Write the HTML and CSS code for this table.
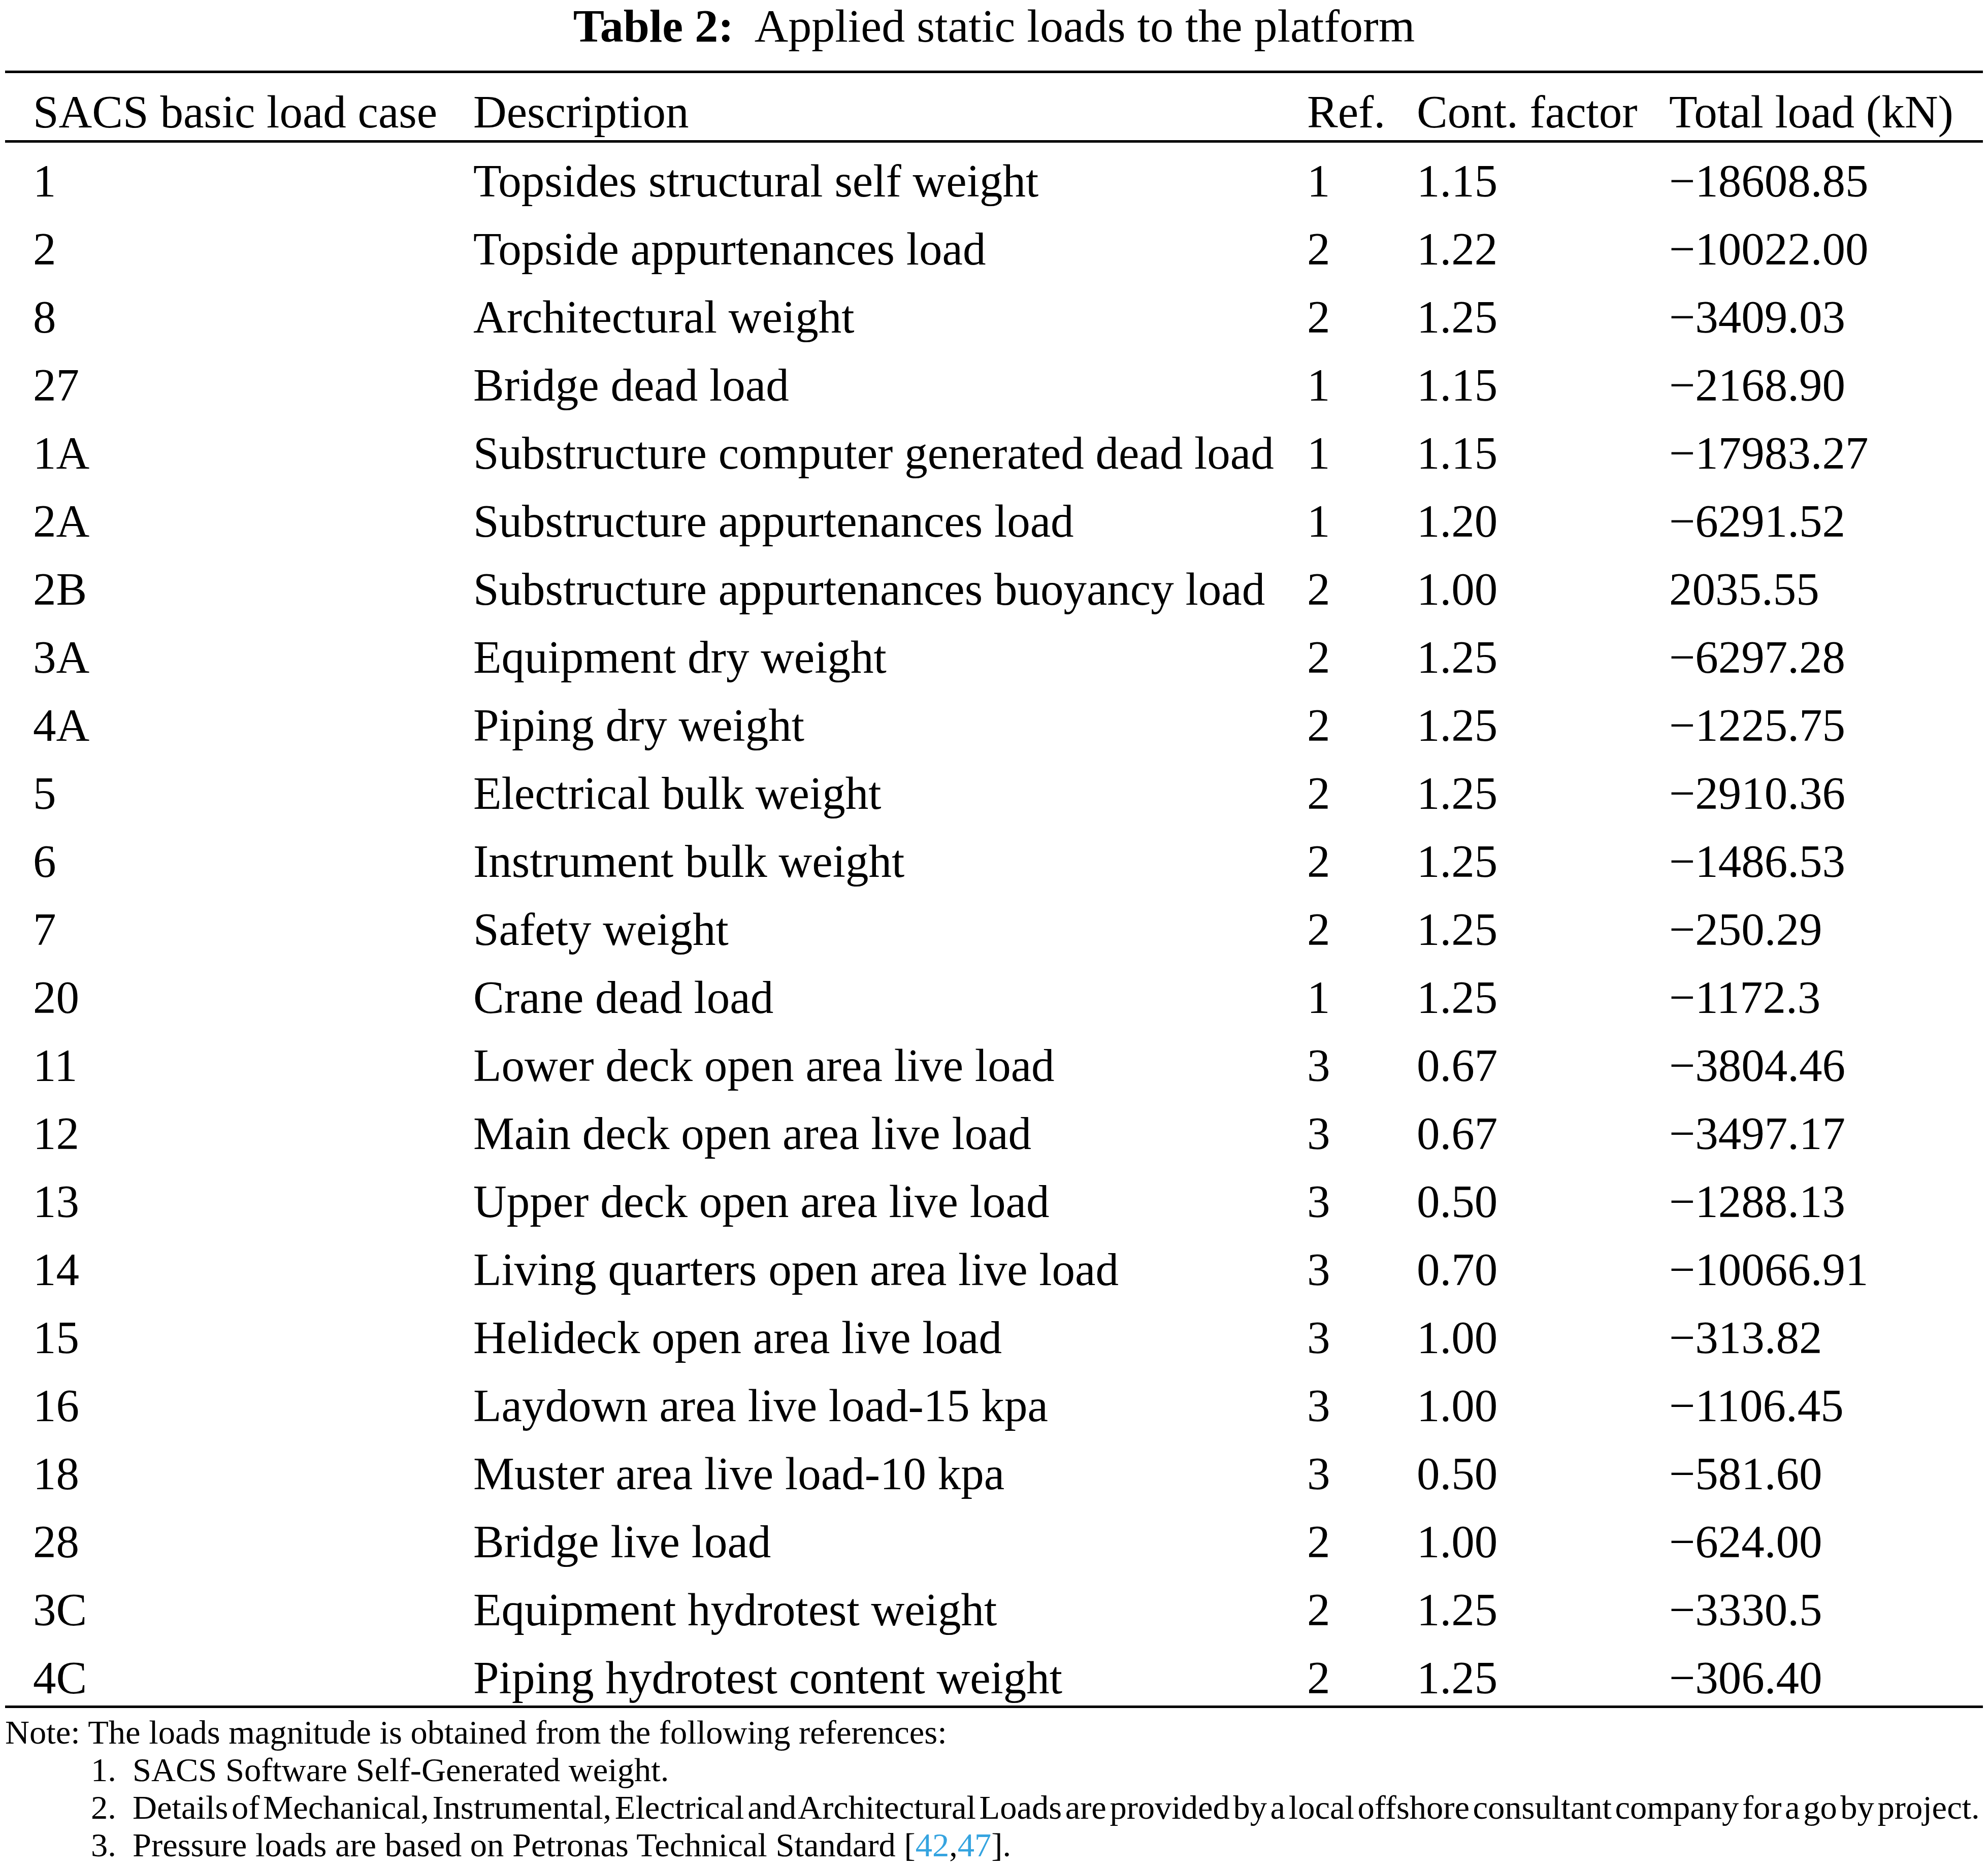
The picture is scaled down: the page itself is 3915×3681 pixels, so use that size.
FILE: index.html
```html
<!DOCTYPE html>
<html lang="en">
<head>
<meta charset="utf-8">
<title>Table 2: Applied static loads to the platform</title>
<link rel="stylesheet" href="styles.css">
</head>
<body>
<div class="page">
  <h1 class="title"><b>Table 2:</b>&nbsp; Applied static loads to the platform</h1>
  <div class="table">
    <div class="row head">
      <div>SACS basic load case</div><div>Description</div><div>Ref.</div><div>Cont. factor</div><div>Total load (kN)</div>
    </div>
    <div class="body">
      <div class="row"><div>1</div><div>Topsides structural self weight</div><div>1</div><div>1.15</div><div>−18608.85</div></div>
      <div class="row"><div>2</div><div>Topside appurtenances load</div><div>2</div><div>1.22</div><div>−10022.00</div></div>
      <div class="row"><div>8</div><div>Architectural weight</div><div>2</div><div>1.25</div><div>−3409.03</div></div>
      <div class="row"><div>27</div><div>Bridge dead load</div><div>1</div><div>1.15</div><div>−2168.90</div></div>
      <div class="row"><div>1A</div><div>Substructure computer generated dead load</div><div>1</div><div>1.15</div><div>−17983.27</div></div>
      <div class="row"><div>2A</div><div>Substructure appurtenances load</div><div>1</div><div>1.20</div><div>−6291.52</div></div>
      <div class="row"><div>2B</div><div>Substructure appurtenances buoyancy load</div><div>2</div><div>1.00</div><div>2035.55</div></div>
      <div class="row"><div>3A</div><div>Equipment dry weight</div><div>2</div><div>1.25</div><div>−6297.28</div></div>
      <div class="row"><div>4A</div><div>Piping dry weight</div><div>2</div><div>1.25</div><div>−1225.75</div></div>
      <div class="row"><div>5</div><div>Electrical bulk weight</div><div>2</div><div>1.25</div><div>−2910.36</div></div>
      <div class="row"><div>6</div><div>Instrument bulk weight</div><div>2</div><div>1.25</div><div>−1486.53</div></div>
      <div class="row"><div>7</div><div>Safety weight</div><div>2</div><div>1.25</div><div>−250.29</div></div>
      <div class="row"><div>20</div><div>Crane dead load</div><div>1</div><div>1.25</div><div>−1172.3</div></div>
      <div class="row"><div>11</div><div>Lower deck open area live load</div><div>3</div><div>0.67</div><div>−3804.46</div></div>
      <div class="row"><div>12</div><div>Main deck open area live load</div><div>3</div><div>0.67</div><div>−3497.17</div></div>
      <div class="row"><div>13</div><div>Upper deck open area live load</div><div>3</div><div>0.50</div><div>−1288.13</div></div>
      <div class="row"><div>14</div><div>Living quarters open area live load</div><div>3</div><div>0.70</div><div>−10066.91</div></div>
      <div class="row"><div>15</div><div>Helideck open area live load</div><div>3</div><div>1.00</div><div>−313.82</div></div>
      <div class="row"><div>16</div><div>Laydown area live load-15 kpa</div><div>3</div><div>1.00</div><div>−1106.45</div></div>
      <div class="row"><div>18</div><div>Muster area live load-10 kpa</div><div>3</div><div>0.50</div><div>−581.60</div></div>
      <div class="row"><div>28</div><div>Bridge live load</div><div>2</div><div>1.00</div><div>−624.00</div></div>
      <div class="row"><div>3C</div><div>Equipment hydrotest weight</div><div>2</div><div>1.25</div><div>−3330.5</div></div>
      <div class="row"><div>4C</div><div>Piping hydrotest content weight</div><div>2</div><div>1.25</div><div>−306.40</div></div>
    </div>
  </div>
  <div class="note">
    <p class="note-lead">Note: The loads magnitude is obtained from the following references:</p>
    <ol class="refs">
      <li><span class="num">1.</span><span>SACS Software Self-Generated weight.</span></li>
      <li class="tight"><span class="num">2.</span><span>Details of Mechanical, Instrumental, Electrical and Architectural Loads are provided by a local offshore consultant company for a go by project.</span></li>
      <li><span class="num">3.</span><span>Pressure loads are based on Petronas Technical Standard [<a class="cite">42</a>,<a class="cite">47</a>].</span></li>
    </ol>
  </div>
</div>
</body>
</html>
```

FILE: styles.css
```css
html, body {
  margin: 0;
  padding: 0;
  background: #ffffff;
}

.page {
  width: 3915px;
  font-family: "Liberation Serif", "Times New Roman", serif;
  color: #000;
}

.title {
  margin: 0 0 37px 0;
  font-size: 92px;
  font-weight: normal;
  line-height: 102px;
  text-align: center;
  white-space: nowrap;
}

.title b {
  font-weight: bold;
}

.table {
  margin-left: 10px;
  width: 3895px;
  border-top: 5px solid #000;
  border-bottom: 5px solid #000;
  font-size: 91px;
}

.row {
  display: grid;
  grid-template-columns: 867px 1642px 216px 497px 1fr;
  padding-left: 55px;
  height: 134px;
  line-height: 134px;
  white-space: nowrap;
}

.row.head {
  height: 110px;
  padding-top: 22px;
  line-height: 110px;
  border-bottom: 5px solid #000;
}

.body {
  padding-top: 9px;
}

.body .row:last-child {
  height: 121px;
}

.note {
  margin-top: 11px;
  padding-left: 10px;
  font-size: 66.5px;
  line-height: 74px;
}

.note-lead {
  margin: 0;
}

.refs {
  list-style: none;
  margin: 0;
  padding: 0 0 0 169px;
}

.refs li {
  display: flex;
  white-space: nowrap;
}

.refs .num {
  width: 82px;
  flex: none;
}

.refs .tight {
  word-spacing: -10px;
}

.cite {
  color: #35a4e0;
}
```
